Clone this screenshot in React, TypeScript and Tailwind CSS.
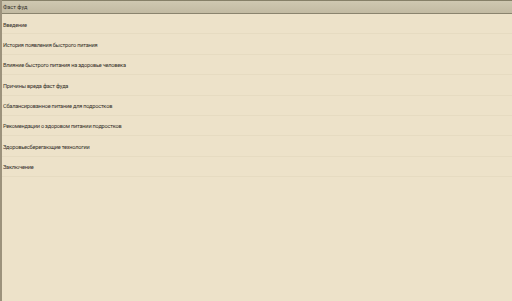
const items = [
  "Введение",
  "История появления быстрого питания",
  "Влияние быстрого питания на здоровье человека",
  "Причины вреда фаст фуда",
  "Сбалансированное питание для подростков",
  "Рекомендации о здоровом питании подростков",
  "Здоровьесберегающие технологии",
  "Заключение",
];

export default function App() {
  return (
    <div className="w-[512px] h-[301px] bg-[#ede2c9] flex flex-col border-l-2 border-[#9c927c] font-['Roboto',sans-serif] text-[5.6px] tracking-[-0.2px] text-[#34302a] overflow-hidden">
      <div className="h-[14px] shrink-0 border-t border-b border-t-[#868068] border-b-[#8a846e] bg-gradient-to-b from-[#cfc8b1] to-[#c2baa2] flex items-center pl-[1px] tracking-normal">
        Фаст фуд
      </div>
      {items.map((t) => (
        <div
          key={t}
          className="h-[20.4px] shrink-0 flex items-center pl-[1px] pt-[2px] border-b border-[#e6dbc1]"
        >
          {t}
        </div>
      ))}
    </div>
  );
}
